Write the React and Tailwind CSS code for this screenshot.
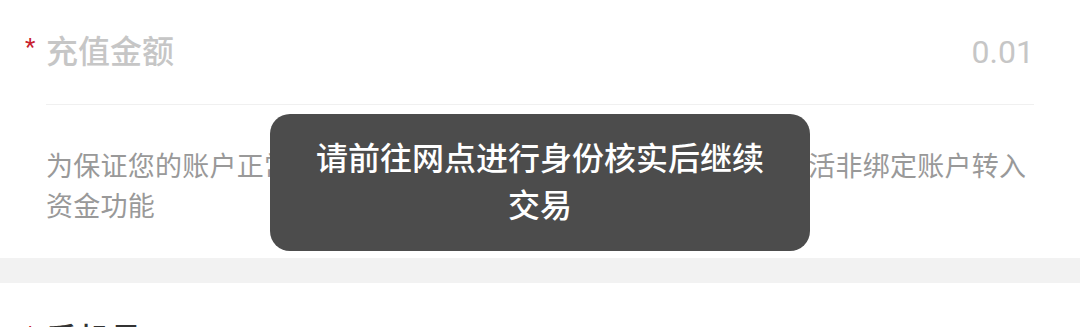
export default function App() {
  return (
    <div
      className="relative w-[1080px] h-[327px] overflow-hidden bg-white"
      style={{ fontFamily: 'Roboto, "Noto Sans CJK SC", sans-serif' }}
    >
      <section className="px-[46px]">
        <div className="flex h-[105px] items-center border-b border-[#f0f0f0]">
          <span className="-ml-[21px] w-[21px] text-[24px] leading-none text-[#c8202f] -mt-[10px]">*</span>
          <span className="text-[32px] font-medium leading-none text-[#c6c6c6]">充值金额</span>
          <span className="ml-auto text-[32px] leading-none text-[#c6c6c6]">0.01</span>
        </div>
        <p className="pt-[42px] pb-[31px] text-[27px] tracking-[0.25px] leading-[40px] text-[#999999]">
          为保证您的账户正常使用，将从您的绑定账户充值0.01元，以激活非绑定账户转入资金功能
        </p>
      </section>
      <div className="h-[25px] bg-[#f2f2f2]" />
      <section className="px-[46px] pt-[4px]">
        <div className="flex h-[105px] items-center">
          <span className="-ml-[21px] w-[21px] text-[24px] leading-none text-[#c8202f] -mt-[10px]">*</span>
          <span className="text-[32px] font-medium leading-none text-[#333333]">手机号</span>
          <span className="ml-auto text-[32px] leading-none text-[#333333]">17553538006</span>
        </div>
      </section>
      <div className="absolute left-[270px] top-[114px] flex h-[137px] w-[540px] items-center justify-center rounded-[20px] bg-[#4c4c4c] px-[44px] text-center text-[32px] font-medium leading-[47px] text-white">
        请前往网点进行身份核实后继续交易
      </div>
    </div>
  );
}
